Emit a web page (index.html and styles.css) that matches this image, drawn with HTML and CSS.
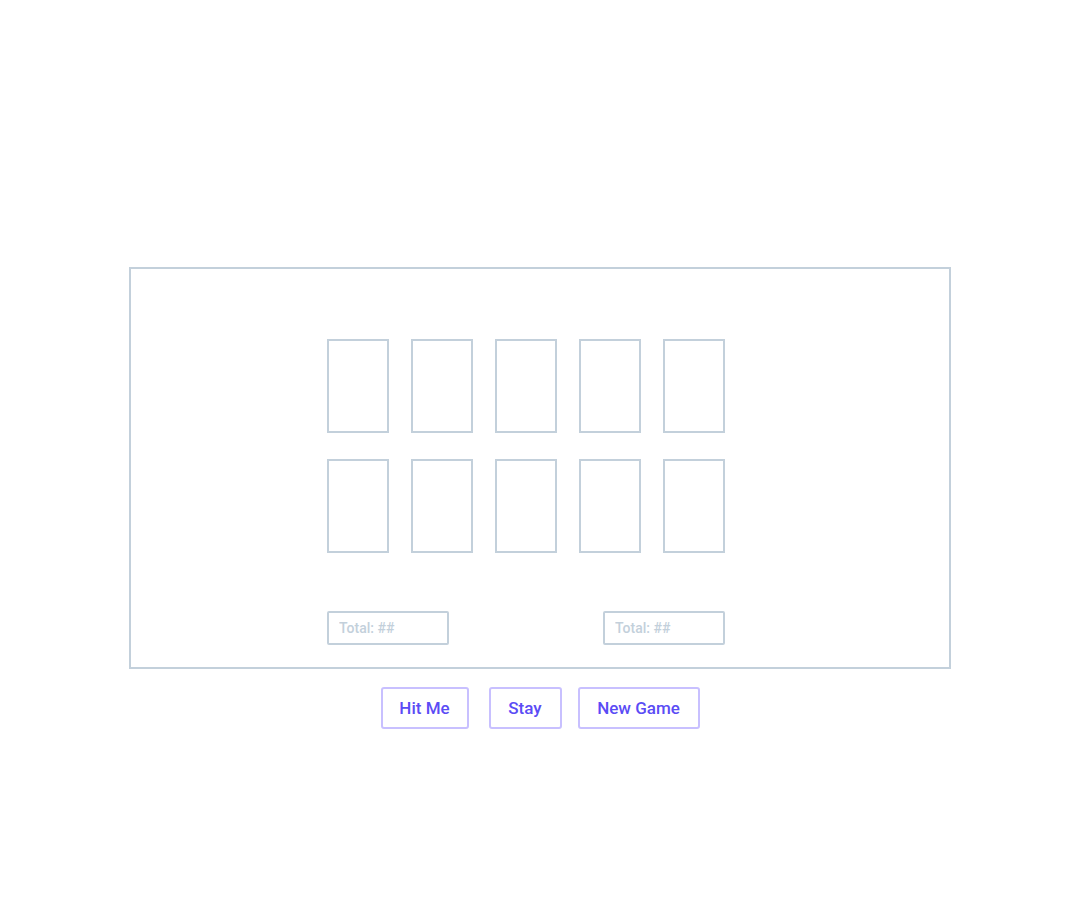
FILE: index.html
```html
<!DOCTYPE html>
<html lang="en">
<head>
<meta charset="utf-8">
<title>Blackjack</title>
<link rel="stylesheet" href="styles.css">
</head>
<body>
<main class="page">
  <section class="table">
    <div class="hands">
      <div class="card"></div>
      <div class="card"></div>
      <div class="card"></div>
      <div class="card"></div>
      <div class="card"></div>
      <div class="card"></div>
      <div class="card"></div>
      <div class="card"></div>
      <div class="card"></div>
      <div class="card"></div>
    </div>
    <div class="totals">
      <input class="total" type="text" placeholder="Total: ##" readonly>
      <input class="total" type="text" placeholder="Total: ##" readonly>
    </div>
  </section>
  <div class="controls">
    <button class="btn btn-hit">Hit Me</button>
    <button class="btn btn-stay">Stay</button>
    <button class="btn btn-new">New Game</button>
  </div>
</main>
</body>
</html>
```

FILE: styles.css
```css
html, body {
  margin: 0;
  padding: 0;
  background: #ffffff;
}

body {
  font-family: Roboto, "Liberation Sans", sans-serif;
}

.page {
  padding-top: 267px;
  display: flex;
  flex-direction: column;
  align-items: center;
}

.table {
  box-sizing: border-box;
  width: 822px;
  height: 402px;
  border: 2px solid #c3d0db;
  padding: 70px 0 0 196px;
}

.hands {
  display: grid;
  grid-template-columns: repeat(5, 62px);
  grid-auto-rows: 94px;
  column-gap: 22px;
  row-gap: 26px;
}

.card {
  box-sizing: border-box;
  border: 2px solid #c3d0db;
}

.totals {
  display: flex;
  gap: 154px;
  margin-top: 58px;
}

.total {
  box-sizing: border-box;
  width: 122px;
  height: 34px;
  margin: 0;
  border: 2px solid #c3d0db;
  border-radius: 2px;
  padding: 0 0 0 10px;
  font-family: Roboto, "Liberation Sans", sans-serif;
  font-size: 14px;
  font-weight: 500;
  color: #c3d0db;
  background: #fff;
  outline: none;
}

.total::placeholder {
  color: #c3d0db;
  opacity: 1;
}

.controls {
  display: flex;
  margin-top: 18px;
}

.btn {
  box-sizing: border-box;
  height: 42px;
  padding: 0;
  margin: 0;
  border: 2px solid #c8c0ff;
  border-radius: 3px;
  background: #fff;
  color: #5b4cf5;
  font-family: Roboto, "Liberation Sans", sans-serif;
  font-size: 17px;
  font-weight: 500;
  text-align: center;
  cursor: pointer;
}

.btn-hit {
  width: 88px;
}

.btn-stay {
  width: 73px;
  margin-left: 20px;
}

.btn-new {
  width: 122px;
  margin-left: 16px;
}
```
